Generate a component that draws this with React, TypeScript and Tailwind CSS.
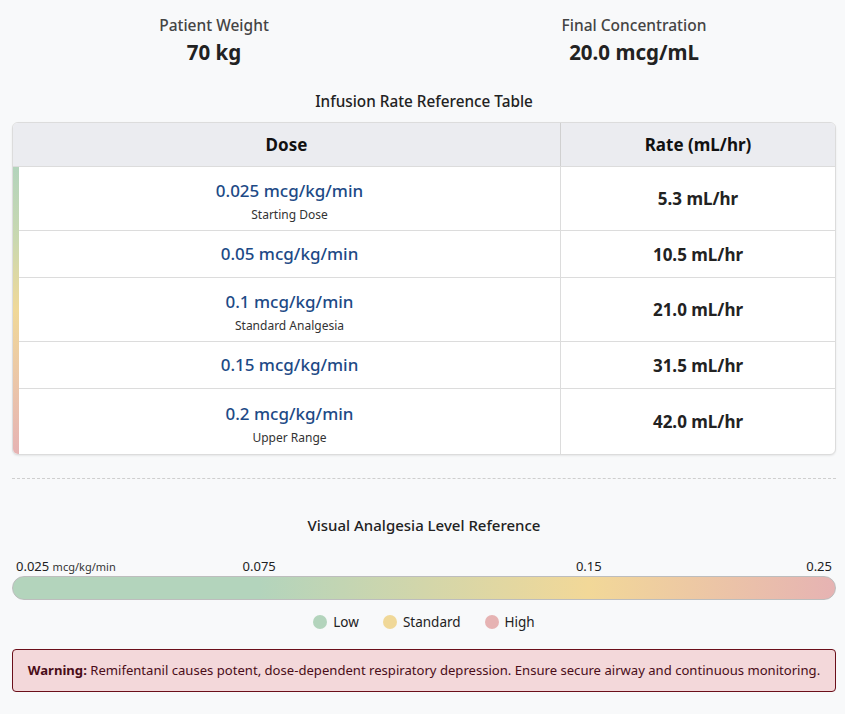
import React from "react";

const rows = [
  { dose: "0.025 mcg/kg/min", sub: "Starting Dose", rate: "5.3 mL/hr" },
  { dose: "0.05 mcg/kg/min", sub: "", rate: "10.5 mL/hr" },
  { dose: "0.1 mcg/kg/min", sub: "Standard Analgesia", rate: "21.0 mL/hr" },
  { dose: "0.15 mcg/kg/min", sub: "", rate: "31.5 mL/hr" },
  { dose: "0.2 mcg/kg/min", sub: "Upper Range", rate: "42.0 mL/hr" },
];

export default function App() {
  return (
    <div
      className="min-h-[714px] bg-[#f8f9fa] pl-3 pr-[9px] pt-[14px] text-[#222]"
      style={{ fontFamily: '"Noto Sans", "Open Sans", sans-serif' }}
    >
      <div className="grid grid-cols-2 gap-4">
        <div className="flex flex-col items-center">
          <div className="text-[15.5px] leading-[22px] font-medium text-[#444]">Patient Weight</div>
          <div className="mt-[2px] text-[20.5px] leading-[28px] font-bold text-[#222]">70 kg</div>
        </div>
        <div className="flex flex-col items-center">
          <div className="text-[15.5px] leading-[22px] font-medium text-[#444]">Final Concentration</div>
          <div className="mt-[2px] text-[20.5px] leading-[28px] font-bold text-[#222]">20.0 mcg/mL</div>
        </div>
      </div>

      <div className="mt-[24px] text-center text-[15.3px] leading-[22px] font-medium text-[#222]">
        Infusion Rate Reference Table
      </div>

      <div className="mt-[10px] overflow-hidden rounded-md border border-[#dcdcdc] bg-white shadow-[0_1px_2px_rgba(0,0,0,0.08)]">
        <div className="flex h-[44px] bg-[#ebecf0] border-b border-[#dcdcdc]">
          <div className="flex w-[548px] items-center justify-center border-r border-[#d0d0d0] text-[17px] font-bold text-[#111]">
            Dose
          </div>
          <div className="flex flex-1 items-center justify-center text-[17px] font-bold text-[#111]">
            Rate (mL/hr)
          </div>
        </div>
        <div className="flex">
          <div className="w-[6px] bg-[linear-gradient(to_bottom,#b3d4bc_0%,#c9d8b0_25%,#f0d898_50%,#ebc6a8_75%,#e6b3b3_100%)]" />
          <div className="flex-1">
            {rows.map((r, i) => (
              <div
                key={i}
                className={`flex ${r.sub ? (i === rows.length - 1 ? "h-[65px]" : "h-[64px]") : "h-[47px]"} ${i < rows.length - 1 ? "border-b border-[#dcdcdc]" : ""}`}
              >
                <div
                  className={`flex w-[542px] flex-col items-center justify-center border-r border-[#dcdcdc] ${r.sub ? "pt-[5px]" : ""}`}
                >
                  <div className="text-[17px] leading-[22px] font-medium text-[#1d4a86]">{r.dose}</div>
                  {r.sub && <div className="mt-[5px] text-[12px] leading-[16px] text-[#333]">{r.sub}</div>}
                </div>
                <div className="flex flex-1 items-center justify-center pt-[1px] text-[17px] font-bold text-[#222]">
                  {r.rate}
                </div>
              </div>
            ))}
          </div>
        </div>
      </div>

      <div className="mt-[23px] border-t border-dashed border-[#cfcfcf]" />

      <div className="mt-[35px] text-center text-[15px] leading-[22px] font-medium text-[#222]">
        Visual Analgesia Level Reference
      </div>

      <div className="relative mt-[21px] h-[20px] text-[13px] leading-[18px] text-[#222]">
        <div className="absolute left-[4px] top-0">
          0.025 <span className="text-[11px] text-[#333]">mcg/kg/min</span>
        </div>
        <div className="absolute left-[30%] top-0 -translate-x-1/2">0.075</div>
        <div className="absolute left-[70%] top-0 -translate-x-1/2">0.15</div>
        <div className="absolute right-[4px] top-0">0.25</div>
      </div>

      <div className="-mt-[1px] h-[24px] rounded-full border border-[#bdbdbd] bg-[linear-gradient(to_right,#b3d4bc_0%,#b3d4bc_30%,#f2d898_70%,#e6b3b3_100%)]" />

      <div className="mt-[13px] flex items-center justify-center gap-6 text-[13.5px] leading-[18px] text-[#222]">
        <div className="flex items-center gap-[6px]">
          <span className="inline-block h-[14px] w-[14px] rounded-full bg-[#b3d4bc]" />
          Low
        </div>
        <div className="flex items-center gap-[6px]">
          <span className="inline-block h-[14px] w-[14px] rounded-full bg-[#f0d898]" />
          Standard
        </div>
        <div className="flex items-center gap-[6px]">
          <span className="inline-block h-[14px] w-[14px] rounded-full bg-[#e6b3b3]" />
          High
        </div>
      </div>

      <div className="mt-[18px] flex h-[43px] items-center justify-center rounded-[4px] border border-[#6b0f1a] bg-[#f3d8da] text-[13.1px] text-[#4a0d18]">
        <span>
          <b className="font-bold">Warning:</b> Remifentanil causes potent, dose-dependent respiratory depression. Ensure secure airway and continuous monitoring.
        </span>
      </div>
    </div>
  );
}
